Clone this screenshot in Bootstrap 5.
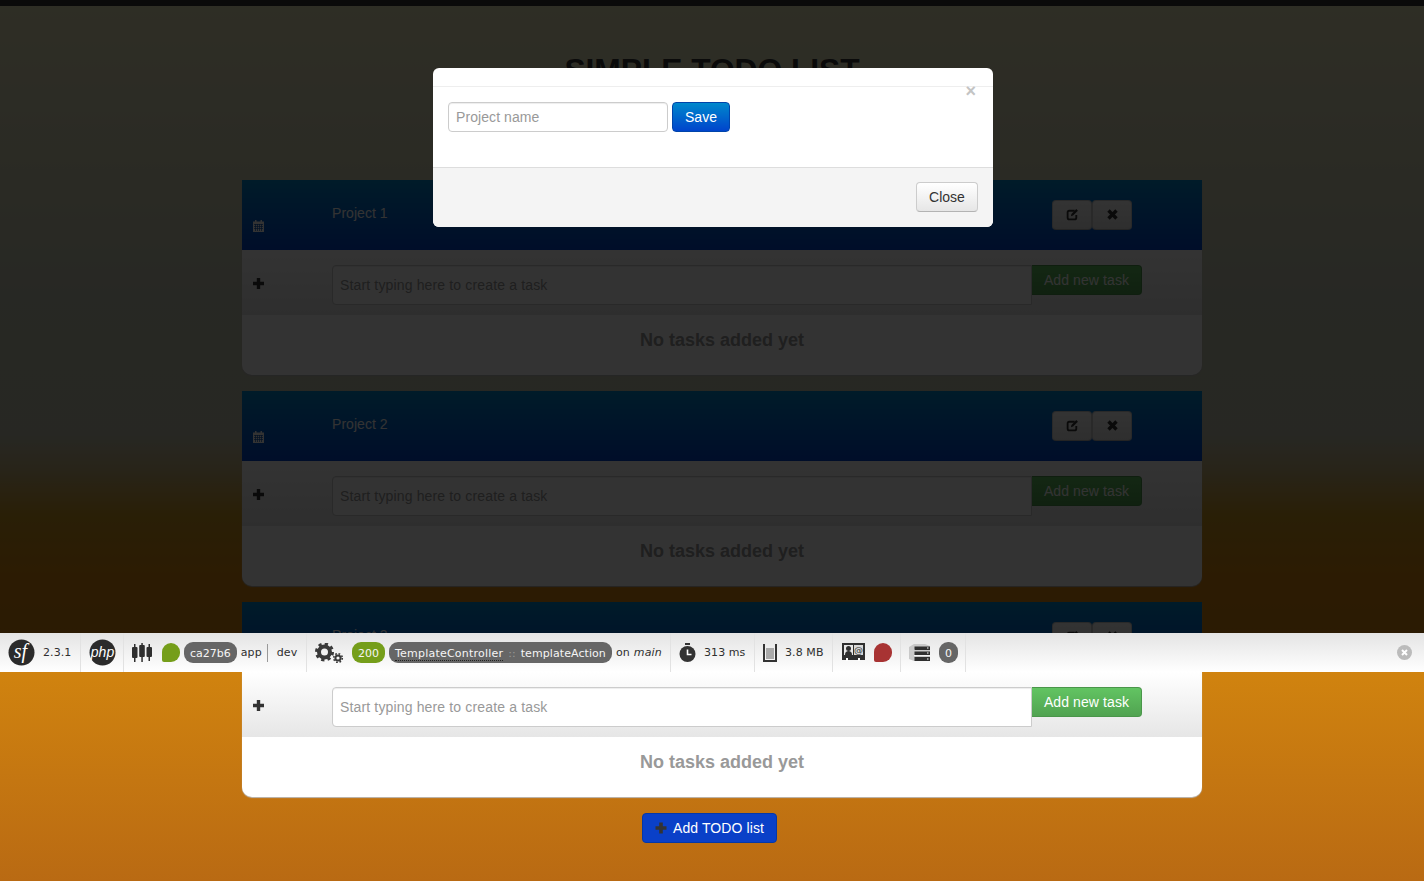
<!DOCTYPE html>
<html lang="en">
<head>
    <meta charset="UTF-8">
    <meta name="viewport" content="width=device-width, initial-scale=1.0">
    <title>Simple TODO list</title>
    <link href="https://cdn.jsdelivr.net/npm/bootstrap@5.3.3/dist/css/bootstrap.min.css" rel="stylesheet">
    <style>
        html, body { height: 881px; overflow: hidden; }
        body {
            position: relative;
            font-family: "Liberation Sans", Arial, sans-serif;
            font-size: 14px;
            color: #333;
            background: linear-gradient(180deg, #e8e4ba 0, #c3c6b2 300px, #c3c4ae 435px, #c8b47d 470px, #cd9b23 515px, #dc870f 580px, #d0830f 672px, #b96a13 881px);
        }
        .top-strip { height: 6px; background: #333; }
        .page-wrap { width: 940px; margin: 0 auto; }
        .page-title { height: 174px; margin: 0; padding-top: 47px; font-size: 31.7px; line-height: 34px; font-weight: 700; text-align: center; color: #333; }
        .todo-panel { width: 960px; height: 195px; margin-bottom: 16px; border: 0; border-radius: 0 0 10px 10px; box-shadow: 0 1px 1px #bbb; overflow: hidden; background: #fff; }
        .panel-head { height: 70px; color: #fff; background: linear-gradient(180deg, #08c, #04c); }
        .icon-col { width: 90px; padding-left: 11px; flex: none; }
        .icon-col svg { display: block; }
        .project-name { padding-top: 23px; width: 720px; line-height: 20px; letter-spacing: .05px; color: #fff; }
        .head-btns { padding-top: 20px; }
        .tool-btn { width: 40px; height: 30px; padding: 0 0 2px; display: flex; align-items: center; justify-content: center; background: linear-gradient(180deg, #fff, #e6e6e6); border: 1px solid #ccc; border-bottom-color: #b3b3b3; border-radius: 4px; }
        .cal-icon { padding-top: 40px; }
        .task-row { height: 65px; background: linear-gradient(180deg, #fff, #e6e6e6); }
        .plus-cell { padding-top: 28px; }
        .task-input { width: 700px; height: 40px; margin-top: 15px; padding: 4px 7px; font-size: 14px; letter-spacing: .15px; color: #555; border: 1px solid #ccc; border-radius: 4px 0 0 4px; box-shadow: inset 0 1px 1px rgba(0,0,0,.075); }
        .task-input::placeholder, .name-input::placeholder { color: #999; opacity: 1; }
        .add-task { width: 110px; height: 30px; margin-top: 15px; padding: 0; font-size: 14px; letter-spacing: .1px; color: #fff; background: linear-gradient(180deg, #62c462, #51a351); border: 1px solid #4a964a; border-left: 0; border-radius: 0 4px 4px 0; }
        .empty-msg { margin: 0; padding-top: 14px; line-height: 22px; font-size: 18px; font-weight: 700; color: #999; text-align: center; }
        .add-list { width: 135px; height: 30px; padding: 0; margin-right: 5px; font-size: 14px; letter-spacing: .1px; color: #fff; background: #0a40c8; border: 1px solid #0438a8; border-radius: 4px; display: inline-flex; align-items: center; justify-content: center; gap: 6px; }
        .list-foot { text-align: center; }

        .dim-layer.modal-backdrop { position: absolute; left: 0; top: 0; width: 100%; height: 672px; background: #000; opacity: .8; z-index: 20; }
        .todo-modal.modal-content { position: absolute; left: 433px; top: 68px; width: 560px; height: 159px; border: 0; border-radius: 6px; background: #fff; z-index: 30; overflow: hidden; display: block; }
        .modal-top { height: 19px; border-bottom: 1px solid #eee; }
        .modal-x { position: absolute; right: 17px; top: 14px; font-size: 18px; line-height: 18px; font-weight: 700; color: #c4c4c4; }
        .modal-mid { height: 80px; padding: 15px; gap: 4px; }
        .name-input { width: 220px; height: 30px; padding: 4px 7px; font-size: 14px; letter-spacing: .08px; border: 1px solid #ccc; border-radius: 4px; box-shadow: inset 0 1px 1px rgba(0,0,0,.075); }
        .save-btn { width: 58px; height: 30px; padding: 0; font-size: 14px; color: #fff; background: linear-gradient(180deg, #08c, #04c); border: 1px solid #04a; border-radius: 4px; }
        .modal-low { height: 60px; padding: 14px 15px; background: #f4f4f4; border-top: 1px solid #ddd; text-align: right; }
        .close-btn { width: 62px; height: 30px; padding: 0; font-size: 14px; color: #333; background: linear-gradient(180deg, #fff, #e6e6e6); border: 1px solid #ccc; border-bottom-color: #b3b3b3; border-radius: 4px; }

        .sf-bar { position: absolute; left: 0; top: 633px; width: 100%; height: 39px; z-index: 40; font-family: "DejaVu Sans", Verdana, sans-serif; font-size: 11px; color: #2f2f2f; background: linear-gradient(180deg, #e4e4e4, #fff); }
        .sf-block { height: 39px; border-right: 1px solid #e2e2e2; flex: none; }
        .b-version { width: 81px; padding-left: 8px; gap: 8px; }
        .b-php { width: 43px; padding-left: 8px; }
        .b-app { width: 183px; padding-left: 8px; }
        .b-req { width: 364px; padding-left: 8px; }
        .b-time { width: 84px; padding-left: 8px; gap: 8px; }
        .b-mem { width: 78px; padding-left: 8px; gap: 8px; }
        .b-mail { width: 68px; padding-left: 9px; gap: 9px; }
        .b-db { width: 65px; padding-left: 8px; gap: 9px; }
        .sf-txt { padding-top: 2px; letter-spacing: .08px; white-space: nowrap; }
        .sf-main { letter-spacing: .2px; }
        .sf-pill { height: 21px; line-height: 23px; padding: 0 6px; color: #f5f5f5; background: #666; border-radius: 9px; white-space: nowrap; }
        .pill-green { background: #759e1a; }
        .sf-drop { width: 18px; height: 19px; background: #759e1a; border-radius: 9px 9px 9px 2px; }
        .drop-red { background: #a83333; }
        .dotted-name { border-bottom: 1px dotted #222; line-height: 13px; display: inline-block; letter-spacing: .22px; }
        .dots { color: #999; margin: 0 5px; }
        .action-name { letter-spacing: .08px; }
        .drop-gap { margin: 0 4px 0 2px; }
        .tiny-sep { height: 18px; border-left: 1px solid #999; margin: 0 9px 0 5px; }
        .sf-close { position: absolute; left: 1397px; top: 12px; }
    </style>
</head>
<body>

<div class="top-strip"></div>

<div class="page-wrap">
    <h1 class="page-title">SIMPLE TODO LIST</h1>

    <div id="todoLists"></div>

    <div class="list-foot">
        <button type="button" class="btn add-list">
            <svg width="12" height="12" viewBox="0 0 12 12"><path d="M4.200 0.500h3.600v3.700h3.700v3.600H7.800v3.700H4.200V7.800H0.500V4.200h3.700z" fill="#333"/></svg>
            Add TODO list
        </button>
    </div>
</div>

<div class="modal-backdrop dim-layer"></div>

<div class="modal-content todo-modal">
    <div class="modal-top"></div>
    <span class="modal-x">×</span>
    <div class="modal-mid d-flex align-items-start">
        <input type="text" class="form-control name-input" placeholder="Project name">
        <button type="button" class="btn save-btn">Save</button>
    </div>
    <div class="modal-low">
        <button type="button" class="btn close-btn">Close</button>
    </div>
</div>

<div class="sf-bar d-flex">
    <div class="sf-block b-version d-flex align-items-center">
        <svg width="27" height="27" viewBox="0 0 27 27"><circle cx="13.500" cy="13.500" r="13" fill="#2b2b2b"/><text x="12.500" y="19" text-anchor="middle" font-family="Liberation Serif, serif" font-style="italic" font-size="20" fill="#fff">sf</text></svg>
        <span class="sf-txt">2.3.1</span>
    </div>
    <div class="sf-block b-php d-flex align-items-center">
        <svg width="27" height="27" viewBox="0 0 27 27"><circle cx="13.500" cy="13.500" r="13" fill="#2b2b2b"/><text x="13.500" y="18" text-anchor="middle" font-family="Liberation Sans, sans-serif" font-style="italic" font-size="14" fill="#fff">php</text></svg>
    </div>
    <div class="sf-block b-app d-flex align-items-center">
        <svg width="20" height="20" viewBox="0 0 20 20" class="me-2"><g fill="#2f2f2f"><rect x="0" y="4" width="5.500" height="11" rx="1"/><rect x="2" y="1" width="1.500" height="18"/><rect x="7.200" y="2" width="5.600" height="12" rx="1"/><rect x="9.300" y="0" width="1.500" height="19"/><rect x="14.500" y="4" width="5.500" height="10" rx="1"/><rect x="16.500" y="1" width="1.500" height="17"/></g></svg>
        <span class="sf-drop drop-gap"></span>
        <span class="sf-pill">ca27b6</span>
        <span class="sf-txt ms-1">app</span>
        <span class="tiny-sep"></span>
        <span class="sf-txt">dev</span>
    </div>
    <div class="sf-block b-req d-flex align-items-center">
        <svg width="29" height="20" viewBox="0 0 29 20" class="me-2"><g fill="none" stroke="#3a3a3a"><circle cx="9.500" cy="9" r="5.500" stroke-width="4"/><circle cx="9.500" cy="9" r="8" stroke-width="3" stroke-dasharray="3.200 3.080"/><circle cx="23" cy="15" r="2.600" stroke-width="2"/><circle cx="23" cy="15" r="4.300" stroke-width="1.600" stroke-dasharray="1.700 1.680"/></g></svg>
        <span class="sf-pill pill-green me-1">200</span>
        <span class="sf-pill me-1"><span class="dotted-name">TemplateController</span><span class="dots">::</span><span class="action-name">templateAction</span></span>
        <span class="sf-txt sf-main">on <em>main</em></span>
    </div>
    <div class="sf-block b-time d-flex align-items-center">
        <svg width="17" height="20" viewBox="0 0 17 20"><g fill="#333"><circle cx="8.500" cy="11" r="8"/><rect x="6" y="0" width="5" height="2"/></g><path d="M8.500 6.500v5h4" fill="none" stroke="#fff" stroke-width="1.600"/></svg>
        <span class="sf-txt">313 ms</span>
    </div>
    <div class="sf-block b-mem d-flex align-items-center">
        <svg width="14" height="19" viewBox="0 0 14 19"><path d="M1 1v17h12V1" fill="none" stroke="#333" stroke-width="2"/><rect x="3" y="5" width="8" height="11" fill="#aaa"/></svg>
        <span class="sf-txt">3.8 MB</span>
    </div>
    <div class="sf-block b-mail d-flex align-items-center">
        <svg width="23" height="19" viewBox="0 0 23 19"><rect x="0" y="0" width="23" height="14" fill="#2f2f2f"/><rect x="2" y="2" width="9" height="10" fill="#e8e8e8"/><circle cx="6.500" cy="5.500" r="2.500" fill="#2f2f2f"/><path d="M3 12c0-3 1.500-4 3.500-4s3.500 1 3.500 4z" fill="#2f2f2f"/><rect x="12" y="2" width="9" height="10" fill="#d8d8d8"/><text x="16.500" y="10" text-anchor="middle" font-size="9" font-family="DejaVu Sans, sans-serif" fill="#333">@</text><rect x="0" y="14" width="23" height="3" fill="#2f2f2f"/><rect x="4" y="15" width="2" height="3" fill="#fff"/><rect x="16" y="15" width="2" height="3" fill="#fff"/></svg>
        <span class="sf-drop drop-red"></span>
    </div>
    <div class="sf-block b-db d-flex align-items-center">
        <svg width="21" height="18" viewBox="0 0 21 18"><path d="M0 3l5-3h11l5 2v3H5v1h16v5H5v1h16v5H5l-5-2z" fill="#c9c9c9"/><rect x="5.500" y="2.500" width="15.500" height="3.500" fill="#2f2f2f"/><rect x="5.500" y="7.500" width="15.500" height="3.500" fill="#2f2f2f"/><rect x="5.500" y="13" width="15.500" height="4" fill="#2f2f2f"/><path d="M18 4h1.500M18 9h1.500M18 15h1.500" stroke="#fff"/></svg>
        <span class="sf-pill">0</span>
    </div>
    <svg class="sf-close" width="15" height="15" viewBox="0 0 15 15"><circle cx="7.500" cy="7.500" r="7.500" fill="#bbb"/><path d="M5 5l5 5M10 5l-5 5" stroke="#fff" stroke-width="2"/></svg>
</div>

<script src="https://cdn.jsdelivr.net/npm/bootstrap@5.3.3/dist/js/bootstrap.bundle.min.js"></script>

<script>
    const projects = ['Project 1', 'Project 2', 'Project 3'];

    const calIcon = '<svg width="11" height="12" viewBox="0 0 11 12"><path d="M0 1.500h2V0h1.500v1.500h4V0H9v1.500h2V12H0z" fill="#fff"/><path d="M1 4.500h9M1 6.500h9M1 8.500h9M2.500 4v7M4.500 4v7M6.500 4v7M8.500 4v7" stroke="#0a50b0" stroke-width=".7"/></svg>';
    const plusIcon = '<svg width="11" height="11" viewBox="0 0 11 11"><path d="M3.800 0h3.400v3.800H11v3.400H7.200V11H3.800V7.200H0V3.800h3.800z" fill="#333"/></svg>';
    const editIcon = '<svg width="13" height="13" viewBox="0 0 12 12"><path d="M8 2.500H3A1.500 1.500 0 0 0 1.500 4v5A1.500 1.500 0 0 0 3 10.500h5A1.500 1.500 0 0 0 9.500 9V6.500" fill="none" stroke="#333" stroke-width="1.700"/><path d="M4.500 7.500l.5-2L9.500 1 11 2.500 6.500 7z" fill="#333"/></svg>';
    const removeIcon = '<svg width="11" height="11" viewBox="0 0 11 11"><path d="M1.500 1.500l8 8M9.500 1.500l-8 8" stroke="#333" stroke-width="3.400"/></svg>';

    document.getElementById('todoLists').innerHTML = projects.map(name => `
        <div class="card todo-panel">
            <div class="panel-head d-flex">
                <div class="icon-col cal-icon">${calIcon}</div>
                <div class="project-name">${name}</div>
                <div class="head-btns d-flex">
                    <button type="button" class="btn tool-btn">${editIcon}</button>
                    <button type="button" class="btn tool-btn">${removeIcon}</button>
                </div>
            </div>
            <div class="task-row d-flex">
                <div class="icon-col plus-cell">${plusIcon}</div>
                <input type="text" class="form-control task-input" placeholder="Start typing here to create a task">
                <button type="button" class="btn add-task">Add new task</button>
            </div>
            <p class="empty-msg">No tasks added yet</p>
        </div>`).join('');
</script>

</body>
</html>
